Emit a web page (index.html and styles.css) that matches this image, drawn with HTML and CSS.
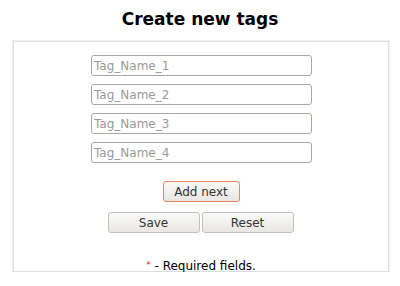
FILE: index.html
```html
<!DOCTYPE html>
<html>
<head>
    <title>Create new tags</title>
    <meta name="viewport" content="width=device-width, initial-scale=1.0">
    <link rel="stylesheet" href="styles.css">
</head>
<body>
    <h1>Create new tags</h1>
    <div class="container">
        <div class="fields">
            <input type="text" placeholder="Tag_Name_1">
            <input type="text" placeholder="Tag_Name_2">
            <input type="text" placeholder="Tag_Name_3">
            <input type="text" placeholder="Tag_Name_4">
        </div>
        <div class="add-row">
            <button class="add">Add next</button>
        </div>
        <div class="buttons">
            <button>Save</button>
            <button>Reset</button>
        </div>
        <div class="note"><span class="star">*</span> - Required fields.</div>
    </div>
</body>
</html>
```

FILE: styles.css
```css
body {
    margin: 0;
    background: white;
    color: #000;
    font-family: 'DejaVu Sans', sans-serif;
}

h1 {
    margin: 0;
    padding-top: 9px;
    height: 32px;
    font-size: 17px;
    font-weight: bold;
    text-align: center;
}

.container {
    margin: 0 11px 0 13px;
    height: 231px;
    border: 1px solid #ddd;
    box-shadow: 0 0 0 1px #f0f0f0;
    padding-top: 13px;
    box-sizing: border-box;
}

.fields {
    display: flex;
    flex-direction: column;
    align-items: center;
    gap: 8px;
    padding-left: 1px;
}

input {
    width: 221px;
    height: 21px;
    box-sizing: border-box;
    border: 1px solid #a8a8a0;
    border-radius: 3px;
    padding: 0 2px;
    font-family: 'DejaVu Sans', sans-serif;
    font-size: 12px;
    color: #333;
}

input::placeholder {
    color: #999;
}

button {
    height: 21px;
    border: 1px solid #c4c0b8;
    border-radius: 3px;
    background: linear-gradient(#fafafa, #e9e7e3);
    font-family: 'DejaVu Sans', sans-serif;
    font-size: 12px;
    color: #333;
    padding: 0;
}

.add-row {
    display: flex;
    justify-content: center;
    margin-top: 18px;
}

.add {
    width: 77px;
    border-color: #e8845e;
}

.buttons {
    display: flex;
    justify-content: center;
    gap: 2px;
    margin-top: 10px;
    padding-right: 1px;
}

.buttons button {
    width: 92px;
}

.note {
    margin-top: 26px;
    text-align: center;
    font-size: 12px;
}

.star {
    color: #e02020;
    font-size: 9px;
    vertical-align: 2px;
}
```
